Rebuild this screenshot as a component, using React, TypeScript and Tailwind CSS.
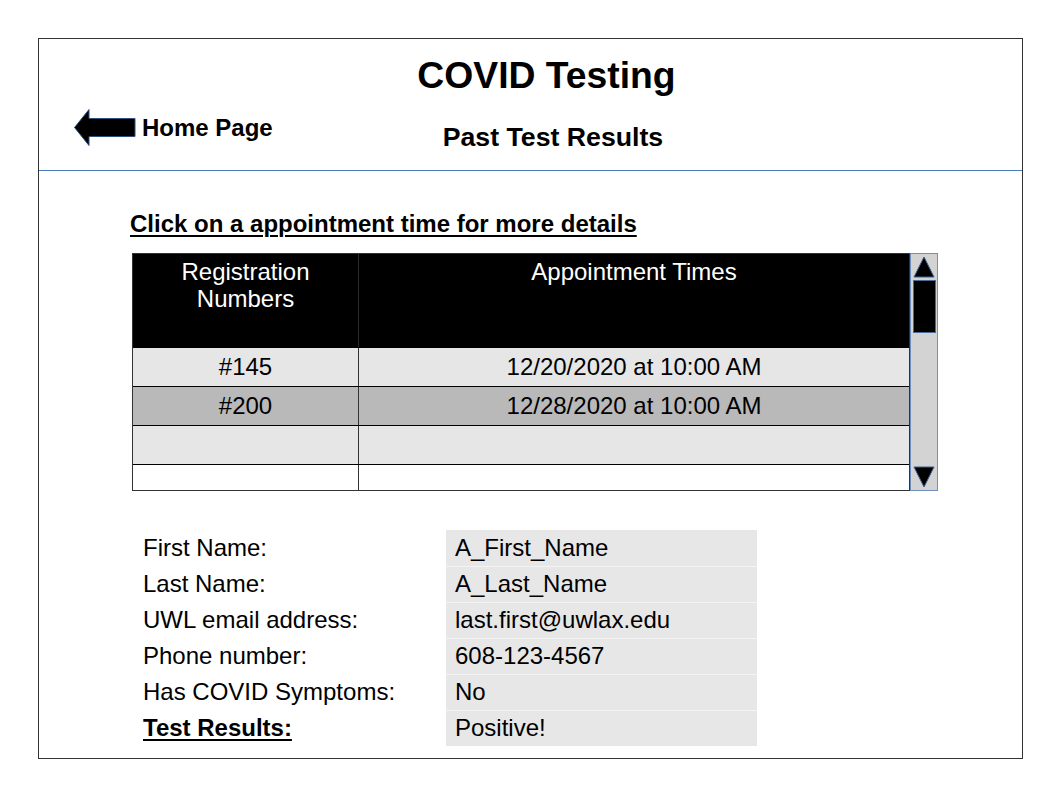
const ROWS = [
  { reg: '#145', time: '12/20/2020 at 10:00 AM', bg: 'bg-[#e6e6e6]' },
  { reg: '#200', time: '12/28/2020 at 10:00 AM', bg: 'bg-[#b9b9b9]' },
  { reg: '', time: '', bg: 'bg-[#e6e6e6]' },
  { reg: '', time: '', bg: 'bg-white' },
]

const DETAILS = [
  { label: 'First Name:', value: 'A_First_Name' },
  { label: 'Last Name:', value: 'A_Last_Name' },
  { label: 'UWL email address:', value: 'last.first@uwlax.edu' },
  { label: 'Phone number:', value: '608-123-4567' },
  { label: 'Has COVID Symptoms:', value: 'No' },
  { label: 'Test Results:', value: 'Positive!', strong: true },
]

function BackArrow() {
  return (
    <svg width="62" height="37" viewBox="0 0 62 37" className="shrink-0">
      <polygon
        points="0.5,18.5 15,0.5 15,9.5 61,9.5 61,27.5 15,27.5 15,36.5"
        fill="#000"
        stroke="#2f4f7f"
        strokeWidth="1"
      />
    </svg>
  )
}

function Scrollbar() {
  return (
    <div className="w-[28px] h-[238px] bg-[#d3d3d3] border border-[#6f8fbf] flex flex-col items-center px-[2px] pt-[2px] pb-[2px]">
      <svg width="22" height="22" viewBox="0 0 22 22">
        <polygon points="11,1 21,21 1,21" fill="#000" stroke="#3e5f8f" strokeWidth="1" />
      </svg>
      <div className="mt-[2px] w-[23px] h-[53px] bg-black border border-[#4a6a9a]" />
      <div className="flex-1" />
      <svg width="22" height="22" viewBox="0 0 22 22">
        <polygon points="1,1 21,1 11,21" fill="#000" stroke="#3e5f8f" strokeWidth="1" />
      </svg>
    </div>
  )
}

export default function App() {
  return (
    <div className="min-h-[794px] bg-white text-black font-['Liberation_Sans',Arial,sans-serif] pt-[38px] pl-[38px]">
      <div className="w-[985px] h-[721px] border border-[#333]">
        {/* Header */}
        <div className="h-[132px] border-b border-[#4a7ebb] pt-[16px]">
          <div className="pl-[32px] text-center text-[37.3px] leading-[40px] font-bold">COVID Testing</div>
          <div className="flex items-start mt-[14px]">
            <div className="flex items-center h-[37px] ml-[35px] gap-[6px]">
              <BackArrow />
              <span className="text-[24px] leading-[27px] font-bold">Home Page</span>
            </div>
            <div className="ml-[170px] mt-[14px] text-[26.7px] leading-[29px] font-bold">Past Test Results</div>
          </div>
        </div>

        {/* Body */}
        <div className="pt-[39px]">
          <div className="ml-[91px] text-[24px] leading-[27px] font-bold underline decoration-2 underline-offset-[3px]">
            Click on a appointment time for more details
          </div>

          <div className="flex ml-[93px] mt-[16px]">
            <div className="w-[778px] h-[238px] border border-[#333] overflow-hidden text-[24px] leading-[27px]">
              <div className="flex h-[93px] bg-black text-white">
                <div className="w-[225px] text-center pt-[4px]">
                  Registration
                  <br />
                  Numbers
                </div>
                <div className="flex-1 border-l border-[#2a2a2a] text-center pt-[4px]">Appointment Times</div>
              </div>
              {ROWS.map((row, i) => (
                <div key={i} className={`flex h-[39px] border-t border-black ${row.bg}`}>
                  <div className="w-[225px] flex items-center justify-center pb-[2px]">{row.reg}</div>
                  <div className="flex-1 border-l border-[#333] flex items-center justify-center pb-[2px]">
                    {row.time}
                  </div>
                </div>
              ))}
            </div>
            <Scrollbar />
          </div>

          <div className="ml-[104px] mt-[39px] text-[24px] leading-[27px]">
            {DETAILS.map((d, i) => (
              <div key={d.label} className="flex h-[36px]">
                <div className="w-[303px] flex items-center pb-[2px]">
                  <span className={d.strong ? 'font-bold underline decoration-2 underline-offset-[3px]' : ''}>
                    {d.label}
                  </span>
                </div>
                <div
                  className={`w-[311px] flex items-center pl-[9px] pb-[2px] bg-[#e7e7e7] ${
                    i > 0 ? 'border-t border-[#f3f3f3]' : ''
                  }`}
                >
                  {d.value}
                </div>
              </div>
            ))}
          </div>
        </div>
      </div>
    </div>
  )
}
